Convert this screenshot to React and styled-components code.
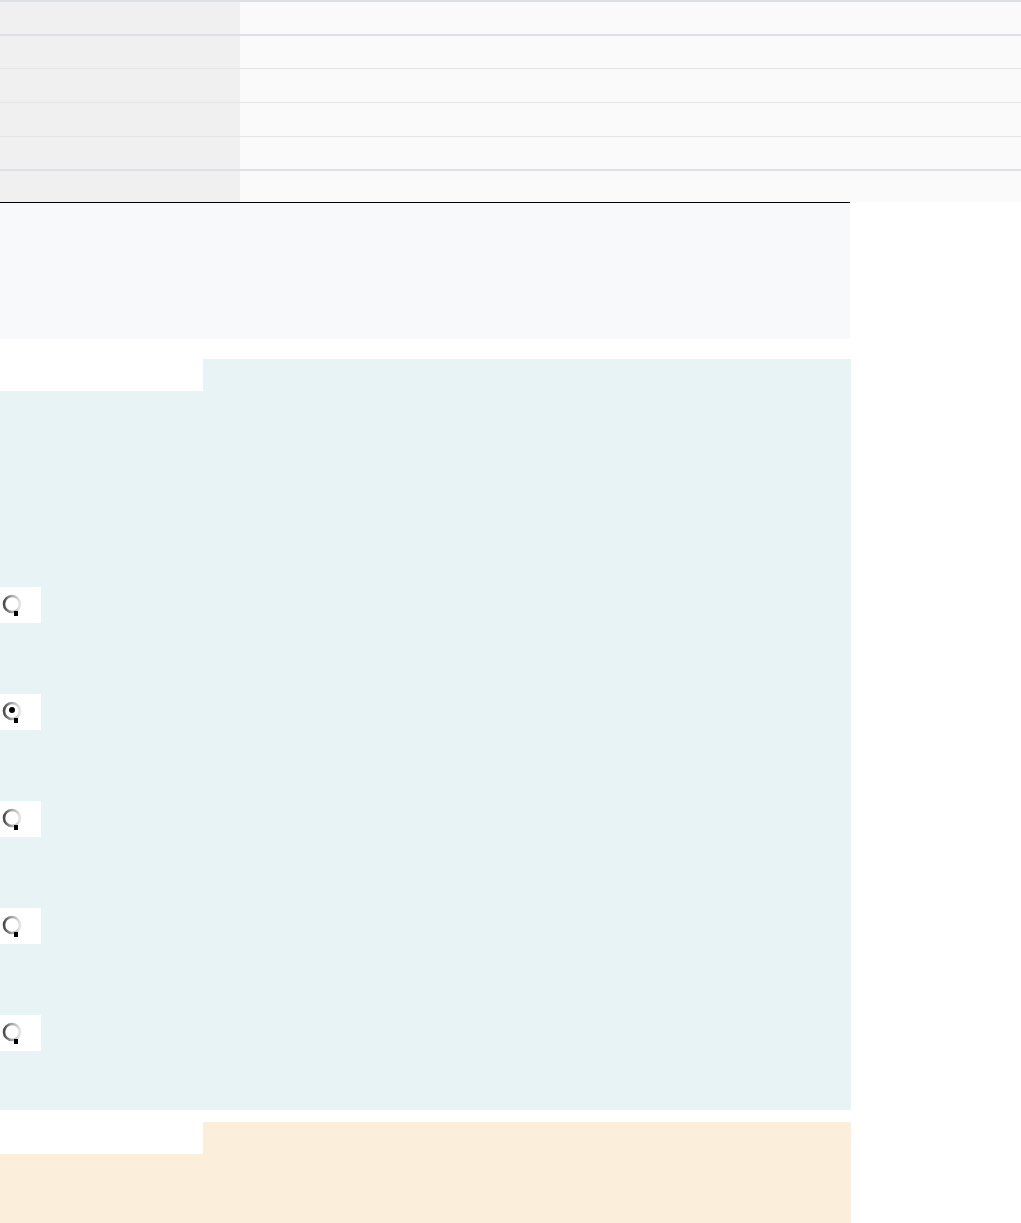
import React from 'react'
import styled, { createGlobalStyle } from 'styled-components'

const GlobalStyle = createGlobalStyle`
  body {
    margin: 0;
    background: #ffffff;
    font-family: "Liberation Sans", Arial, sans-serif;
  }
`

const Table = styled.div`
  width: 100%;
  border-top: 2px solid #dde1e6;
`

const Row = styled.div`
  display: grid;
  grid-template-columns: 240px 1fr;
  height: ${props => props.h}px;
  border-bottom: ${props => props.line}px solid ${props => (props.line > 1 ? '#dde1e6' : '#e3e4e8')};
`

const HeadCell = styled.div`
  background: #f0f0f0;
`

const Cell = styled.div`
  background: #fafafa;
`

const Summary = styled.div`
  width: 850px;
  height: 136px;
  background: #f8f9fa;
  border-top: 1px solid #000000;
  margin-bottom: 20px;
`

const Section = styled.div`
  width: 851px;
  background: ${props => props.bg};
  padding-bottom: ${props => props.pb}px;
  margin-bottom: 12px;
`

const Tab = styled.div`
  width: 203px;
  height: 32px;
  background: #ffffff;
`

const Filler = styled.div`
  height: 300px;
`

const Options = styled.div`
  display: flex;
  flex-direction: column;
  gap: 71px;
  padding-top: 196px;
`

const Choice = styled.label`
  display: flex;
  align-items: center;
  width: 41px;
  height: 36px;
  background: #ffffff;
  padding-left: 1px;
  box-sizing: border-box;
`

const rows = [
  { h: 32, line: 2 },
  { h: 32, line: 1 },
  { h: 33, line: 1 },
  { h: 33, line: 1 },
  { h: 32, line: 2 },
  { h: 31, line: 0 },
]

function Radio({ checked }) {
  return (
    <svg width="24" height="24" viewBox="0 0 24 24">
      <defs>
        <linearGradient id="ring" x1="0" y1="0" x2="1" y2="0">
          <stop offset="0" stopColor="#4a4a4a" />
          <stop offset="0.45" stopColor="#a0a0a0" />
          <stop offset="1" stopColor="#e6e6e6" />
        </linearGradient>
      </defs>
      <circle cx="11" cy="11" r="8" fill="#ffffff" stroke="url(#ring)" strokeWidth="2.6" />
      <rect x="13" y="18" width="4" height="5" fill="#000000" />
      {checked && <circle cx="11" cy="10" r="3" fill="#000000" />}
    </svg>
  )
}

export default function App() {
  const choices = [false, true, false, false, false]
  return (
    <>
      <GlobalStyle />
      <Table>
        {rows.map((r, i) => (
          <Row key={i} h={r.h} line={r.line}>
            <HeadCell />
            <Cell />
          </Row>
        ))}
      </Table>
      <Summary />
      <Section bg="#e8f3f5" pb={59}>
        <Tab />
        <Options>
          {choices.map((c, i) => (
            <Choice key={i}>
              <Radio checked={c} />
            </Choice>
          ))}
        </Options>
      </Section>
      <Section bg="#fbeedb" pb={0}>
        <Tab />
        <Filler />
      </Section>
    </>
  )
}
